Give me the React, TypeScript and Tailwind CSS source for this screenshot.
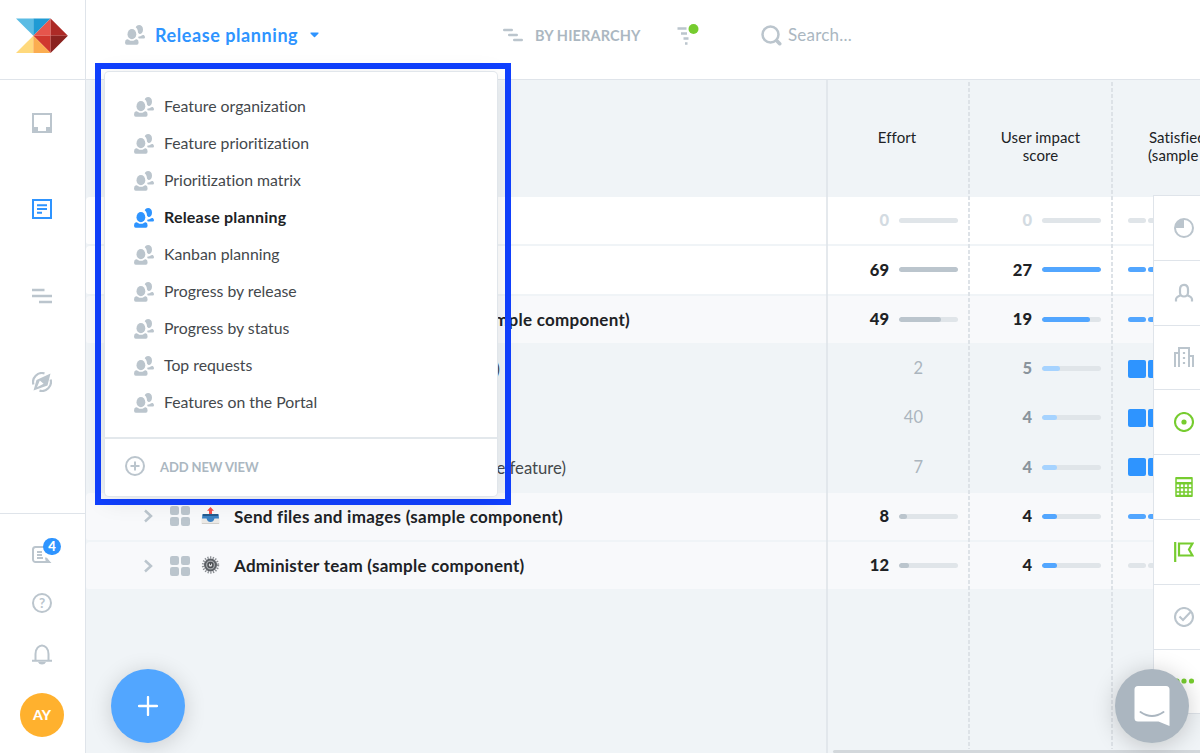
import type { ReactNode } from "react";
import clsx from "clsx";

interface RowData {
  title?: string;
  titleClass?: string;
  kind: "total" | "component" | "feature";
  icon?: ReactNode;
  effort: number;
  effortBar?: number;
  impact: number;
  impactBar: number;
  satisfied: "on" | "off" | "box";
}

const views = [
  "Feature organization",
  "Feature prioritization",
  "Prioritization matrix",
  "Release planning",
  "Kanban planning",
  "Progress by release",
  "Progress by status",
  "Top requests",
  "Features on the Portal",
];

const rows: RowData[] = [
  { kind: "total", effort: 0, effortBar: 0, impact: 0, impactBar: 0, satisfied: "off" },
  { kind: "total", effort: 69, effortBar: 100, impact: 27, impactBar: 100, satisfied: "on" },
  { kind: "component", title: "(sample component)", titleClass: "w-[544px] tracking-[0.270px]", effort: 49, effortBar: 71, impact: 19, impactBar: 81, satisfied: "on" },
  { kind: "feature", title: "feature)", titleClass: "w-[414px]", effort: 2, impact: 5, impactBar: 31, satisfied: "box" },
  { kind: "feature", effort: 40, impact: 4, impactBar: 25, satisfied: "box" },
  { kind: "feature", title: "(sample feature)", titleClass: "w-[480px]", effort: 7, impact: 4, impactBar: 25, satisfied: "box" },
  { kind: "component", title: "Send files and images (sample component)", icon: <OutboxIcon />, effort: 8, effortBar: 13, impact: 4, impactBar: 25, satisfied: "on" },
  { kind: "component", title: "Administer team (sample component)", icon: <GearIcon />, effort: 12, effortBar: 17, impact: 4, impactBar: 25, satisfied: "off" },
];

export default function App() {
  return (
    <div className="relative flex h-[753px] w-[1200px] overflow-hidden bg-[#f0f4f7] font-[Lato,sans-serif] text-[#202225] [font-variant-ligatures:none]">
      <Sidebar />
      <div className="flex min-w-0 flex-1 flex-col">
        <TopBar />
        <Board />
      </div>
      <ViewMenu />
      <SidePanel />
      <button className="absolute left-[111px] top-[669px] flex size-[74px] items-center justify-center rounded-full bg-[#52a6ff] shadow-[0_3px_22px_rgba(0,0,0,0.16)]">
        <svg width="20" height="20" viewBox="0 0 20 20" stroke="#fff" strokeWidth="2.300" strokeLinecap="round">
          <path d="M10 1v18M1 10h18" />
        </svg>
      </button>
      <button className="absolute left-[1115px] top-[669px] flex size-[74px] items-center justify-center rounded-full bg-[#abb6c0] shadow-[0_3px_24px_rgba(0,0,0,0.2)]">
        <svg width="36" height="42" viewBox="0 0 36 42" fill="none">
          <path d="M4 1h28a3.5 3.5 0 0 1 3.5 3.5V41l-11-4.500H4A3.500 3.500 0 0 1 .5 33V4.500A3.500 3.500 0 0 1 4 1Z" fill="#fff" />
          <path d="M6.500 27Q18 35 29.500 27" stroke="#abb6c0" strokeWidth="2" strokeLinecap="round" />
        </svg>
      </button>
    </div>
  );
}

function Sidebar() {
  return (
    <aside className="flex w-[86px] shrink-0 flex-col border-r border-[#dfe4ea] bg-white">
      <div className="h-20 border-b border-[#dfe4ea] pl-4 pt-[18px]">
        <Logo />
      </div>
      <nav className="flex h-[434px] flex-col items-center gap-[66.300px] border-b border-[#dfe4ea] pr-[1px] pt-[33px]">
        <svg width="20" height="20" viewBox="0 0 20 20" fill="none" stroke="#bbc5cd">
          <path d="M1 1h18v18H1z" strokeWidth="2" />
          <path d="M1 14h5v4h8v-4h5v5H1Z" fill="#bbc5cd" stroke="none" />
        </svg>
        <svg width="20" height="20" viewBox="0 0 20 20" fill="none" stroke="#2e94ff" strokeWidth="2">
          <path d="M1 1h18v18H1zM5 6.200h10M5 10h10M5 13.800h5" />
        </svg>
        <svg width="20" height="20" viewBox="0 0 20 20" stroke="#bbc5cd" strokeWidth="2.600">
          <path d="M0 4h12.500M0 10h20M7 16h13" />
        </svg>
        <svg width="20" height="20" viewBox="0 0 20 20" fill="none">
          <path d="M12.500 1.400A9 9 0 0 0 1.400 12.500M7.500 18.600A9 9 0 0 0 18.600 7.500" stroke="#bbc5cd" strokeWidth="2.200" />
          <path fillRule="evenodd" d="M18.500 1.500 15.500 13.500 1.500 18.500 4.500 8ZM7.800 8.400 5 15.200 11.600 11.800Z" fill="#bbc5cd" />
        </svg>
      </nav>
      <div className="flex flex-1 flex-col items-center pr-[1px] pt-[29px]">
        <div className="relative h-[50px]">
          <svg width="20" height="22" viewBox="0 0 20 22" fill="none" stroke="#bbc5cd" strokeWidth="2">
            <path d="M12 4H3.500A2.500 2.500 0 0 0 1 6.500v10A2.500 2.500 0 0 0 3.500 19H17l-3-4M5 9h5M5 12h5M5 15h6" />
            <path d="m13 14 6.500 6H14Z" fill="#bbc5cd" stroke="none" />
          </svg>
          <span className="absolute -top-[5px] left-[11px] flex h-[17px] w-[18px] items-center justify-center rounded-full bg-[#2e94ff] text-[13px] font-black text-white">
            4
          </span>
        </div>
        <div className="relative flex size-5 items-center justify-center rounded-full border-2 border-[#bbc5cd] text-[13.500px] font-bold text-[#bbc5cd]">
          ?
        </div>
        <svg className="mt-[31px]" width="20" height="21" viewBox="0 0 20 21" fill="none" stroke="#bbc5cd" strokeWidth="2">
          <path d="M3.500 16.500V10C3.500 4.500 7 1.500 10 1.500s6.500 3 6.500 8.500v6.500M0 16.800h20" />
          <path d="M6 18h8q-1 2.500-4 2.500T6 18Z" fill="#bbc5cd" stroke="none" />
        </svg>
        <div className="mt-[27.500px] flex size-[44px] items-center justify-center rounded-full bg-[#ffb12e] text-[14px] font-black text-white">
          AY
        </div>
      </div>
    </aside>
  );
}

function TopBar() {
  return (
    <header className="flex h-20 shrink-0 items-center border-b border-[#dfe4ea] bg-white pb-[9px] pl-[39px]">
      <PeopleIcon className="text-[#bbc5cd]" />
      <span className="ml-[10px] w-[144px] whitespace-nowrap text-[18px] font-bold tracking-[0.570px] text-[#2e94ff]">
        Release planning
      </span>
      <svg className="ml-[11px]" width="9" height="6" viewBox="0 0 9 6" fill="#2e94ff">
        <path d="M1 .5h7Q9 .7 8.500 1.600L5 5q-.5.500-1 0L.500 1.600Q0 .700 1 .500Z" />
      </svg>
      <svg className="ml-[184px]" width="20" height="14" viewBox="0 0 20 14" stroke="#bbc5cd" strokeWidth="2.400" strokeLinecap="round">
        <path d="M1.200 2h7.600M6.200 7h7.600M11.200 12h7.600" />
      </svg>
      <span className="ml-3 mt-[2px] w-[106px] whitespace-nowrap text-[14.500px] font-bold tracking-[0.120px] text-[#abb7c1]">
        BY HIERARCHY
      </span>
      <svg className="ml-[36px]" width="23" height="24" viewBox="0 0 23 24" stroke="#bbc5cd" strokeWidth="2.300">
        <path d="M.500 5.500h9M4 10.500h6M6.500 15.500h5M8 20.500h2.500" />
        <circle cx="16.500" cy="6" r="5" fill="#76cc2f" stroke="none" />
      </svg>
      <svg className="ml-[61px]" width="21" height="21" viewBox="0 0 21 21" fill="none" stroke="#bbc5cd" strokeLinecap="round">
        <circle cx="9.500" cy="9.500" r="8" strokeWidth="2.500" />
        <path d="m15.800 15.800 2.900 2.900" strokeWidth="3.600" />
      </svg>
      <span className="ml-[6px] text-[17px] tracking-[0.200px] text-[#abb7c1]">Search...</span>
    </header>
  );
}

function Board() {
  return (
    <main className="relative flex-1 overflow-hidden">
      <div className="flex h-[117px] pt-[49px] text-center text-[15px] leading-[17.500px] tracking-[0.080px] *:shrink-0">
        <div className="w-[741px]" />
        <div className="w-[140px]">Effort</div>
        <div className="w-[147px]">
          User impact
          <br />
          score
        </div>
        <div className="ml-[34px] text-left">
          <span className="ml-[1px]">Satisfied</span>
          <br />
          (sample
        </div>
      </div>
      {rows.map((row, i) => (
        <Row key={i} row={row} />
      ))}
      <div className="absolute inset-y-0 left-[740px] w-[2px] bg-[#dfe4e8]/80" />
      <Dashes className="left-[882px]" />
      <Dashes className="left-[1025px]" />
      <div className="absolute bottom-0 left-[747px] right-0 h-[3px] rounded-l bg-[#d3d8dc]" />
    </main>
  );
}

function Dashes({ className }: { className: string }) {
  return (
    <div
      className={clsx(
        "absolute bottom-1 top-[2px] w-[1.500px] bg-[repeating-linear-gradient(to_bottom,#dde2e7_0_4px,transparent_4px_6px)]",
        className,
      )}
    />
  );
}

/**
 * One line of the board: title, effort, impact score and the satisfied column.
 */
function Row({ row }: { row: RowData }) {
  const feature = row.kind === "feature";
  const empty = row.effort === 0;
  return (
    <div
      className={clsx(
        "flex h-[49.300px] items-center rounded-l border-b-2 border-[#f0f4f7]",
        row.kind === "total" && "bg-white",
        row.kind === "component" && "bg-[#f8f9fb]",
      )}
    >
      <div className="flex w-[741px] shrink-0 items-center">
        {row.icon ? (
          <>
            <svg className="ml-[58px]" width="9" height="14" viewBox="0 0 9 14" fill="none" stroke="#bbc5cd" strokeWidth="2.500">
              <path d="m1 1.500 6 5.500-6 5.500" />
            </svg>
            <GridIcon />
            <span className="ml-[11px]">{row.icon}</span>
            <span className="ml-[14px] mt-[1px] whitespace-nowrap text-[17px] font-bold tracking-[0.270px]">{row.title}</span>
          </>
        ) : (
          <span
            className={clsx(
              "whitespace-nowrap pt-[2px] text-right",
              feature ? "text-[16.700px] text-[#44484c]" : "text-[17px] font-bold",
              row.titleClass,
            )}
          >
            {row.title}
          </span>
        )}
      </div>
      {feature ? (
        <span className="w-[143px] pr-[47px] text-right text-[16.500px] text-[#abb5be]">{row.effort}</span>
      ) : (
        <Score value={row.effort} bar={row.effortBar ?? 0} color="bg-[#bbc5cd]" text={empty ? "text-[#d3dbe2]" : "text-[#202225]"} />
      )}
      <Score
        value={row.impact}
        bar={row.impactBar}
        color={feature ? "bg-[#a6d3ff]" : "bg-[#52a6ff]"}
        text={feature ? "text-[#8a949d]" : empty ? "text-[#d3dbe2]" : "text-[#202225]"}
      />
      <div className="ml-[15px] flex gap-[2px]">
        {[0, 1].map((n) => (
          <span
            key={n}
            className={clsx(
              "w-[18px] shrink-0",
              row.satisfied === "box" && "h-[18px] rounded-[2px] bg-[#2e94ff]",
              row.satisfied === "on" && "h-[5px] rounded-full bg-[#52a6ff]",
              row.satisfied === "off" && "h-[5px] rounded-full bg-[#e0e5e9]",
            )}
          />
        ))}
      </div>
    </div>
  );
}

function Score({ value, bar, color, text }: { value: number; bar: number; color: string; text: string }) {
  return (
    <div className="flex w-[143px] shrink-0 items-center">
      <span className={clsx("w-[62px] text-right text-[16.500px] font-black", text)}>{value}</span>
      <span className="ml-[10px] h-[5px] w-[59px] overflow-hidden rounded-full bg-[#e0e5e9]">
        <span className={clsx("block h-full rounded-full", color)} style={{ width: `${bar}%` }} />
      </span>
    </div>
  );
}

function ViewMenu() {
  return (
    <div className="absolute left-[95px] top-[63px] h-[442px] w-[416px] border-[6px] border-[#1040ff] pl-[4px] pt-[3px]">
      <div className="flex h-[424px] w-[392px] flex-col rounded-[4px] bg-white shadow-[0_0_0_1px_#e1e6eb,0_4px_24px_rgba(0,0,0,0.1)]">
        <ul className="h-[367px] border-b-2 border-[#e3e8ec] pl-[29px] pt-4">
          {views.map((view) => {
            const active = view === "Release planning";
            return (
              <li key={view} className="flex h-[37px] items-center">
                <PeopleIcon className={active ? "text-[#2e94ff]" : "text-[#bbc5cd]"} />
                <span
                  className={clsx(
                    "-mt-[1px] ml-[10px]",
                    active ? "text-[16px] font-bold tracking-[0.200px]" : "text-[15.800px] text-[#44484c]",
                  )}
                >
                  {view}
                </span>
              </li>
            );
          })}
        </ul>
        <div className="flex flex-1 items-center pb-[3px] pl-5 text-[13px] font-bold tracking-[-0.100px] text-[#abb7c1]">
          <svg width="20" height="20" viewBox="0 0 20 20" fill="none" stroke="#bbc5cd" strokeWidth="2">
            <circle cx="10" cy="10" r="9" />
            <path d="M10 5.500v9M5.500 10h9" />
          </svg>
          <span className="ml-[15px] mt-[3px]">ADD NEW VIEW</span>
        </div>
      </div>
    </div>
  );
}

function SidePanel() {
  const icons = [
    <g fill="none" stroke="#bbc5cd" strokeWidth="2">
      <circle cx="10" cy="10" r="9" />
      <path d="M10 1v9H1a9 9 0 0 1 9-9Z" fill="#bbc5cd" stroke="none" />
    </g>,
    <g fill="none" stroke="#bbc5cd" strokeWidth="2.200">
      <path d="M6 6.500C6 3.500 7.500 1.800 10 1.800s4 1.700 4 4.700v3c0 2-1.500 4-4 4s-4-2-4-4ZM2 18.500v-2.300c0-2 1.800-2.800 5-4M18 18.500v-2.300c0-2-1.800-2.800-5-4" />
    </g>,
    <g fill="none" stroke="#bbc5cd" strokeWidth="2">
      <path d="M5 20V1h10v19M1 20V6h4M19 20V9h-4" />
      <path d="M10 5v12" strokeWidth="2.200" strokeDasharray="2 3" />
    </g>,
    <g fill="none" stroke="#76cc2f" strokeWidth="2.100">
      <circle cx="10" cy="10" r="9" />
      <circle cx="10" cy="10" r="2.600" fill="#76cc2f" stroke="none" />
    </g>,
    <g fill="none" stroke="#76cc2f" strokeWidth="1.500">
      <path d="M2 1h16v18H2zM2 6.500h16M2 10.800h16M2 14.900h16M6 6.500V19M10 6.500V19M14 6.500V19" />
      <path d="M2 1.200h16M2 18.800h16M2 6.200h16" strokeWidth="2.200" />
    </g>,
    <g fill="none" stroke="#76cc2f" strokeWidth="2.200">
      <path d="M1.200 0v20M5 1.500h13.500L15 7.500l3.500 6H5Z" />
    </g>,
    <g fill="none" stroke="#bbc5cd" strokeWidth="2.100">
      <circle cx="10" cy="10" r="9" />
      <path d="m5.500 9.500 3.500 3.500 8-8.500" />
    </g>,
    <g fill="#76cc2f">
      <circle cx="3" cy="10" r="2.600" />
      <circle cx="10" cy="10" r="2.600" />
      <circle cx="17.500" cy="10" r="2.600" />
    </g>,
  ];
  return (
    <div className="absolute left-[1153px] top-[195px] w-[61px] border-l border-t border-[#dfe4ea] bg-white">
      {icons.map((icon, i) => (
        <div key={i} className="flex h-[64.800px] items-center justify-center border-b border-[#dfe4ea]">
          <svg width="20" height="20" viewBox="0 0 20 20">
            {icon}
          </svg>
        </div>
      ))}
    </div>
  );
}

function Logo() {
  return (
    <svg width="52" height="36" viewBox="0 0 52 36">
      <path d="M0 .500h17.300v17.300Z" fill="#5bbce4" />
      <path d="M17.300.500h17.300L17.300 17.800Z" fill="#1f9bd4" />
      <path d="M34.600.500v17.300H17.300Z" fill="#e6554c" />
      <path d="m34.600.500 17.300 17.300H34.600Z" fill="#ad2a26" />
      <path d="M17.300 17.800h17.300v17.300Z" fill="#d0382f" />
      <path d="M34.600 17.800h17.300L34.600 35.100Z" fill="#8a221f" />
      <path d="M17.300 17.800v17.300H0Z" fill="#ffd97c" />
      <path d="m17.300 17.800 17.300 17.300H17.300Z" fill="#fbad50" />
    </svg>
  );
}

function PeopleIcon({ className }: { className: string }) {
  return (
    <svg className={clsx("shrink-0", className)} width="20" height="20" viewBox="0 0 20 20" fill="currentColor">
      <ellipse cx="6.900" cy="9.200" rx="4.400" ry="5.100" />
      <path d="M2 14.300q1.200-.1 2 .6c1.600 1.200 4.200 1.200 5.800 0q.8-.7 2-.6 1.800.4 1.800 3.200 0 2.300-1.700 2.300H1.700Q0 19.800 0 17.500q0-2.800 2-3.200Z" />
      <path d="M10.700 2.300C11.500.7 12.700 0 14 0c2.400 0 4 1.800 4 4.400 0 2.300-1 4.300-2.800 4.700-1-.2-1.900-.7-2.200-1.600-.1-2.300-.8-3.800-2.300-5.200Z" />
      <path d="M13.200 11.800q2.500-.3 4-1.500.7-.6 1.500-.2 1.300.7 1.300 2.200 0 1.200-1.200 1.200h-5q-.6-.7-.6-1.700Z" />
    </svg>
  );
}

function GridIcon() {
  return (
    <svg className="ml-[17px]" width="20" height="20" viewBox="0 0 20 20" fill="#bbc5cd">
      <rect width="9" height="9" rx="2.200" />
      <rect x="11" width="9" height="9" rx="2.200" />
      <rect y="11" width="9" height="9" rx="2.200" />
      <rect x="11" y="11" width="9" height="9" rx="2.200" />
    </svg>
  );
}

function OutboxIcon() {
  return (
    <svg className="-mt-[1px]" width="19" height="18" viewBox="0 0 19 18">
      <path d="M1.500 8h16l1 4v5h-18v-5Z" fill="#ebe9e6" />
      <path d="M1.500 7h16l.5 4.500h-4.500q-1 3.500-4 3.500t-4-3.500H1Z" fill="#3b82c4" />
      <path d="M2 7h15l.3 2H1.700Z" fill="#245b8e" />
      <path d="M9.500 0 13 3.800h-2V7H8V3.800H6Z" fill="#f4504b" />
      <path d="M1 16.500h17" stroke="#d2cfcb" />
    </svg>
  );
}

function GearIcon() {
  return (
    <svg className="-mt-[2px]" width="19" height="18" viewBox="0 0 19 18" fill="none">
      <circle cx="9.500" cy="9" r="7.600" stroke="#8b8f94" strokeWidth="2.200" strokeDasharray="1.300 1.400" />
      <circle cx="9.500" cy="9" r="5.500" fill="#a8abaf" stroke="#5c6065" strokeWidth="2" />
      <circle cx="9.500" cy="9" r="2.500" fill="#d5d7d9" stroke="#4b4e52" strokeWidth="1.400" />
      <path d="M9.500 9V6.500" stroke="#4b4e52" />
    </svg>
  );
}
